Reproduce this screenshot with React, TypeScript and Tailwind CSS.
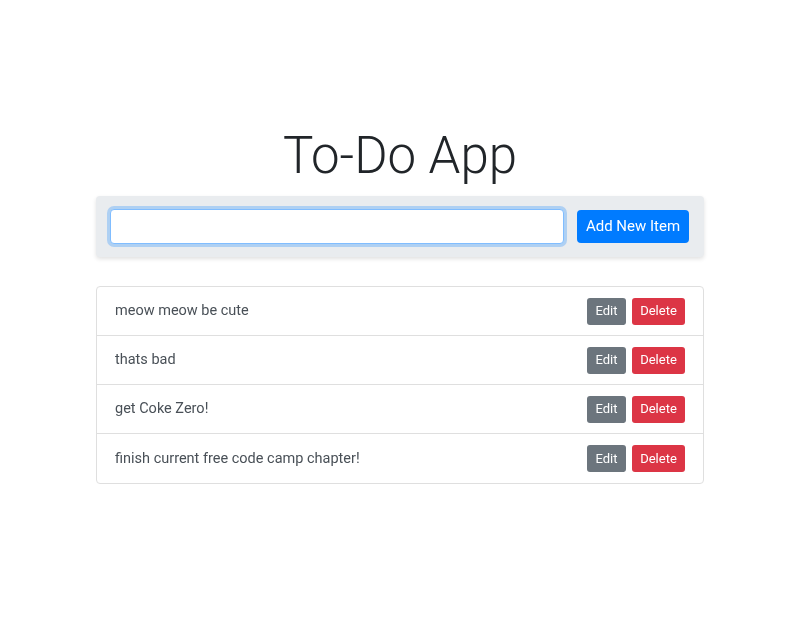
import { useState } from "react";

const items = [
  "meow meow be cute",
  "thats bad",
  "get Coke Zero!",
  "finish current free code camp chapter!",
];

export default function App() {
  const [text, setText] = useState("");

  return (
    <div
      className="min-h-[640px] bg-white pt-[126px]"
      style={{ fontFamily: "Roboto, 'Liberation Sans', sans-serif" }}
    >
      <div className="mx-auto w-[608px]">
        <h1 className="text-center text-[51px] font-light leading-[60px] text-[#212529] mb-[10px]">
          To-Do App
        </h1>

        {/* input panel */}
        <div className="flex items-center gap-[13px] rounded-[4px] bg-[#e9ecef] pl-[14px] pr-[15px] py-[13px] shadow-[0_2px_4px_rgba(0,0,0,0.12)]">
          <input
            autoFocus
            value={text}
            onChange={(e) => setText(e.target.value)}
            className="h-[35px] flex-1 rounded-[4px] border border-[#80bdff] bg-white px-3 text-[15px] text-[#495057] outline-none shadow-[0_0_0_3px_rgba(0,123,255,0.25)]"
          />
          <button className="h-[33px] w-[112px] rounded-[4px] bg-[#007bff] text-[15px] text-white">
            Add New Item
          </button>
        </div>

        {/* list */}
        <ul className="mt-[29px] rounded-[4px] border border-[#dfdfdf]">
          {items.map((item, i) => (
            <li
              key={i}
              className={
                "flex h-[49px] items-center justify-between pl-[18px] pr-[18px] " +
                (i < items.length - 1 ? "border-b border-[#dfdfdf]" : "")
              }
            >
              <span className="text-[14.5px] text-[#495057]">{item}</span>
              <div className="flex gap-[6px]">
                <button className="h-[27px] w-[39px] rounded-[3px] bg-[#6c757d] text-[13px] text-white">
                  Edit
                </button>
                <button className="h-[27px] w-[53px] rounded-[3px] bg-[#dc3545] text-[13px] text-white">
                  Delete
                </button>
              </div>
            </li>
          ))}
        </ul>
      </div>
    </div>
  );
}
